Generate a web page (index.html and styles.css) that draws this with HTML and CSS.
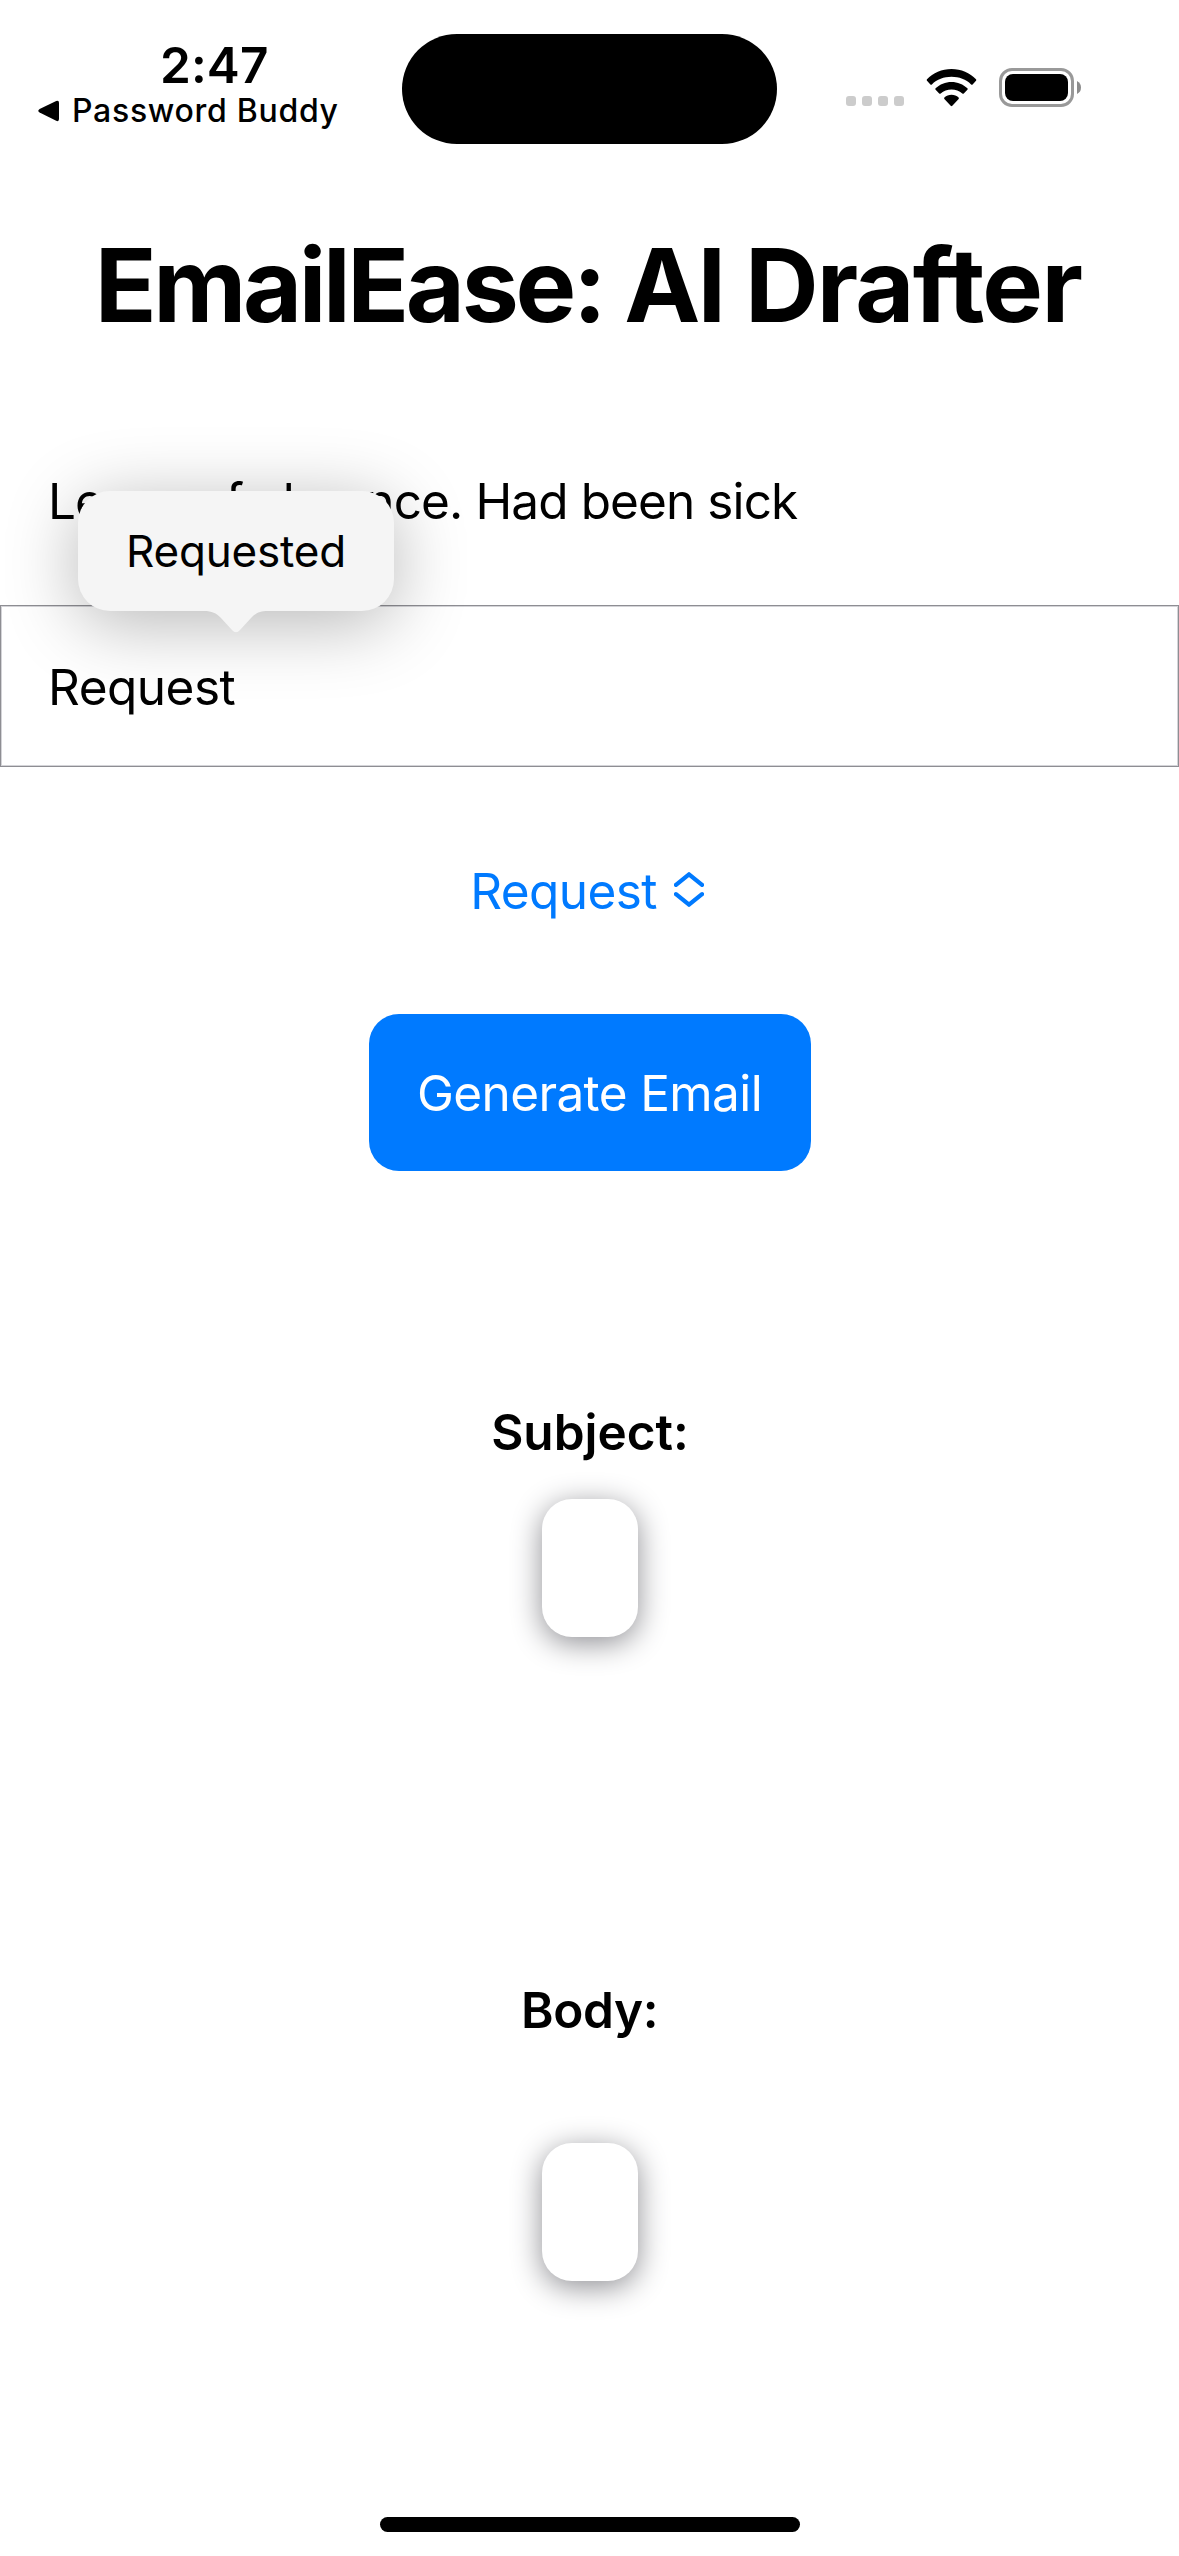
FILE: index.html
```html
<!DOCTYPE html>
<html lang="en">
<head>
<meta charset="utf-8">
<title>EmailEase: AI Drafter</title>
<link rel="stylesheet" href="styles.css">
</head>
<body>
<div class="screen">
  <header class="status-bar">
    <div class="status-left">
      <div class="clock">2:47</div>
      <div class="back-link">
        <svg class="back-arrow" width="22" height="22" viewBox="0 0 22 22"><path d="M1.6 8.9 18.2 1.1Q21 0 21 3V19Q21 22 18.2 20.8L1.6 12.6Q-1 10.8 1.6 8.9Z"/></svg>
        <span class="back-label">Password Buddy</span>
      </div>
    </div>
    <div class="island"></div>
    <div class="status-right">
      <div class="signal"><i></i><i></i><i></i><i></i></div>
      <svg class="wifi" width="51" height="38" viewBox="0 0 51 38">
        <path d="M25.5 0C35.2 0 43.900 3.900 50 10.200Q50.700 11 50 11.800L46.600 15.400Q45.900 16.100 45.100 15.400C40 10.500 33.100 7.800 25.500 7.800S11 10.500 5.900 15.400Q5.100 16.100 4.400 15.400L1 11.800Q.3 11 1 10.200C7.100 3.900 15.800 0 25.500 0Z"/>
        <path d="M25.500 13C31.600 13 37.200 15.400 41.400 19.300Q42.100 20 41.400 20.800L37.800 24.500Q37.100 25.200 36.300 24.500C33.400 22 29.600 20.500 25.500 20.500S17.600 22 14.700 24.500Q13.900 25.200 13.200 24.500L9.600 20.800Q8.900 20 9.600 19.300C13.800 15.400 19.400 13 25.500 13Z"/>
        <path d="M25.500 25.800C28.200 25.800 30.700 26.800 32.600 28.500Q33.300 29.200 32.600 30L26.300 36.800Q25.500 37.600 24.700 36.800L18.400 30Q17.700 29.200 18.400 28.500C20.300 26.800 22.800 25.800 25.500 25.800Z"/>
      </svg>
      <svg class="battery" width="82" height="39" viewBox="0 0 82 39">
        <rect x="1.500" y="1.500" width="72" height="36" rx="11.500" fill="none" stroke="#999" stroke-width="3"/>
        <rect x="6" y="6" width="63" height="27" rx="8"/>
        <path d="M78 13Q82 15 82 19.500T78 26Z" fill="#8c8c8c"/>
      </svg>
    </div>
  </header>

  <main class="content">
    <h1 class="title"><span class="title-name">EmailEase: </span>AI <span class="title-last">Drafter</span></h1>
    <div class="field field-plain">Leave of absence. Had been sick</div>
    <div class="field field-focused">
      <span>Request</span>
      <div class="popover">
        Requested
        <svg class="popover-tail" width="64" height="24" viewBox="0 0 64 24"><path d="M0 0V1C8 1 12 3 17 8L28 20Q32 24.500 36 20L47 8C52 3 56 1 64 1V0Z"/></svg>
      </div>
    </div>
    <div class="picker">
      <span>Request</span>
      <svg class="chevrons" width="30" height="35" viewBox="0 0 30 35"><path d="M2 12.800 15 2.300 28 12.800M2 22.200 15 32.700 28 22.200"/></svg>
    </div>
    <button class="generate">Generate Email</button>
    <h2 class="label label-subject">Subject:</h2>
    <div class="card card-subject"></div>
    <h2 class="label label-body">Body:</h2>
    <div class="card card-body"></div>
  </main>
  <div class="home-indicator"></div>
</div>
</body>
</html>
```
FILE: styles.css
```css
* { box-sizing: border-box; }

body {
  margin: 0;
  background: #fff;
  color: #000;
  font-family: "Inter", "Liberation Sans", sans-serif;
}

.screen {
  width: 1179px;
  height: 2556px;
  display: flex;
  flex-direction: column;
  align-items: center;
  overflow: hidden;
}

/* Status bar */
.status-bar {
  width: 100%;
  height: 177px;
  display: grid;
  grid-template-columns: 402px 375px 402px;
  align-items: start;
}

.status-left { padding-top: 37px; }

.clock {
  padding-left: 160px;
  font-size: 49.5px;
  font-weight: 600;
  line-height: 56px;
  letter-spacing: 0.1px;
}

.back-link {
  display: flex;
  align-items: flex-start;
  gap: 12px;
  padding-left: 38px;
}

.back-arrow { margin-top: 7px; }

.back-label {
  font-size: 32px;
  font-weight: 500;
  line-height: 35px;
  letter-spacing: 0.7px;
  white-space: nowrap;
}

.island {
  margin-top: 34px;
  height: 110px;
  border-radius: 55px;
  background: #000;
}

.status-right {
  display: flex;
  align-items: flex-start;
  padding: 68px 0 0 69px;
}

.signal {
  display: flex;
  gap: 6px;
  margin: 28px 22px 0 0;
}

.signal i {
  width: 10px;
  height: 10px;
  border-radius: 3px;
  background: #ccc;
}

.wifi { margin: 1px 22px 0 0; }

/* Form */
.content {
  width: 100%;
  display: flex;
  flex-direction: column;
  align-items: center;
  font-size: 49.5px;
  line-height: 60px;
}

.title {
  margin: 46px 3px 3px 0;
  font-size: 102px;
  font-weight: 700;
  line-height: 124px;
  letter-spacing: -2.75px;
  white-space: nowrap;
}

.title-name { letter-spacing: -3.4px; }
.title-last { letter-spacing: -1.7px; }

.field {
  width: 100%;
  padding-left: 48px;
}

.field-plain {
  height: 255px;
  padding-top: 121px;
  letter-spacing: -0.9px;
}

.field-focused {
  position: relative;
  height: 162px;
  padding: 51px 0 0 47px;
  border: 1px solid #8e8e93;
  box-shadow: inset 0 0 0 1px #d4d4d8;
  letter-spacing: -0.5px;
}

.popover {
  position: absolute;
  left: 77px;
  top: -115px;
  width: 316px;
  height: 120px;
  padding-top: 33px;
  border-radius: 32px;
  background: #f5f5f5;
  box-shadow: 0 12px 72px rgba(0, 0, 0, 0.29);
  font-size: 44px;
  line-height: 54px;
  letter-spacing: -0.18px;
  text-align: center;
}

.popover-tail {
  position: absolute;
  left: 126px;
  top: 119px;
  fill: #f5f5f5;
}

.picker {
  display: flex;
  align-items: flex-start;
  gap: 17px;
  margin: 94px 5px 0 0;
  color: #007aff;
  letter-spacing: -0.6px;
}

.chevrons {
  margin-top: 11px;
  fill: none;
  stroke: #007aff;
  stroke-width: 4.3;
  stroke-linecap: round;
  stroke-linejoin: round;
}

.generate {
  width: 442px;
  height: 157px;
  margin-top: 93px;
  padding: 0;
  border: 0;
  border-radius: 30px;
  background: #007aff;
  color: #fff;
  font: inherit;
  letter-spacing: -0.62px;
}

.label {
  margin: 0;
  font-size: 49.5px;
  font-weight: 600;
}

.label-subject { margin: 231px 0 0 1px; }

.label-body {
  margin-top: 343px;
  letter-spacing: -0.37px;
}

.card {
  width: 96px;
  height: 138px;
  border-radius: 30px;
  background: #fff;
  box-shadow: 0 6px 30px #8e8e93;
}

.card-subject { margin-top: 37px; }
.card-body { margin-top: 103px; }

.home-indicator {
  width: 420px;
  height: 15px;
  margin-top: 236px;
  border-radius: 8px;
  background: #000;
}
```
